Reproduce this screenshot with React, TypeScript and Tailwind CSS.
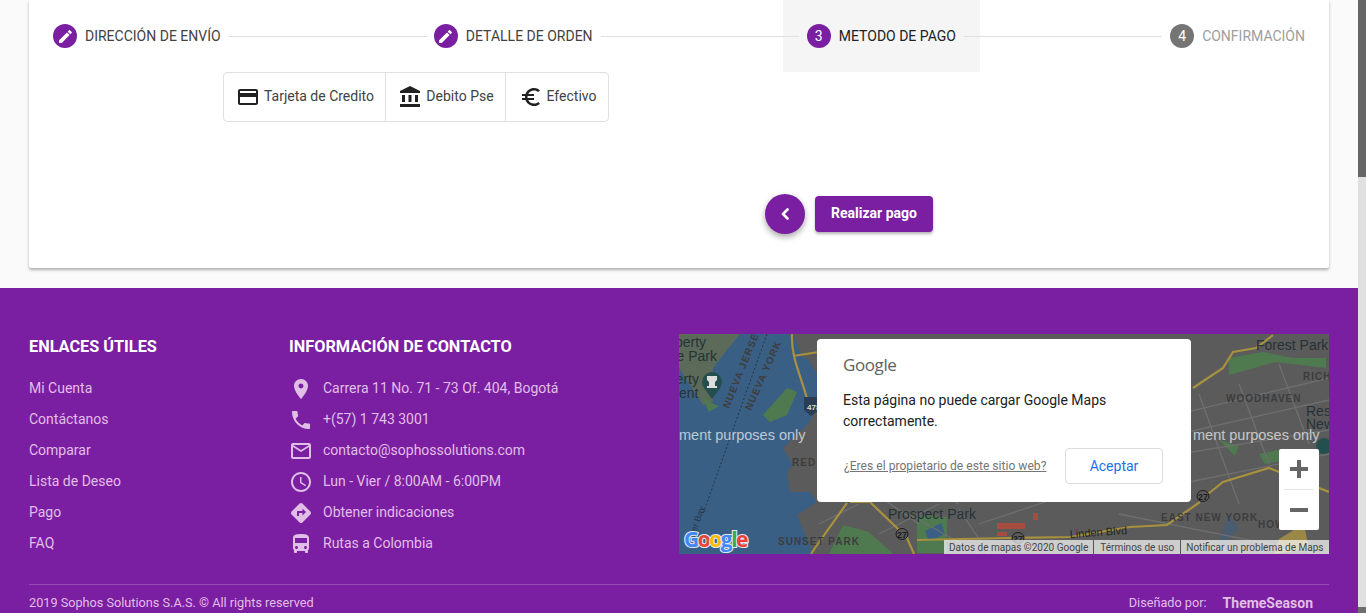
import React from "react";
import { MdEdit, MdCreditCard, MdAccountBalance, MdEuroSymbol, MdPlace, MdPhone, MdMailOutline, MdAccessTime, MdDirections, MdDirectionsBus } from "react-icons/md";

const Step = ({ mark, label, active, muted }: { mark: React.ReactNode; label: string; active?: boolean; muted?: boolean }) => (
  <div className={`flex h-[72px] shrink-0 items-center px-6 ${active ? "bg-[#f5f5f5]" : ""}`}>
    <span className={`mr-2 flex h-6 w-6 items-center justify-center rounded-full text-[14px] text-white ${muted ? "bg-[#757575]" : "bg-[#7b1fa2]"}`}>{mark}</span>
    <span className={`text-[14px] ${muted ? "text-[#9e9e9e]" : active ? "text-[#212121]" : "text-[#424242]"}`}>{label}</span>
  </div>
);
const Line = ({ first }: { first?: boolean }) => <div className={`relative z-10 h-0 flex-1 -ml-4 border-t border-[#e0e0e0] ${first ? "-mr-[17px]" : "-mr-4"}`} />;

const Tab = ({ icon, label, w, last }: { icon: React.ReactNode; label: string; w: string; last?: boolean }) => (
  <div className={`flex h-full items-center justify-center gap-1 pl-px text-[14px] text-[#424242] ${w} ${last ? "" : "border-r border-[#e0e0e0]"}`}>
    {icon}
    <span className="pb-[2px]">{label}</span>
  </div>
);

const links = ["Mi Cuenta", "Contáctanos", "Comparar", "Lista de Deseo", "Pago", "FAQ"];
const contacts: [React.ReactNode, string][] = [
  [<MdPlace size={24} />, "Carrera 11 No. 71 - 73 Of. 404, Bogotá"],
  [<MdPhone size={24} />, "+(57) 1 743 3001"],
  [<MdMailOutline size={24} />, "contacto@sophossolutions.com"],
  [<MdAccessTime size={24} />, "Lun - Vier / 8:00AM - 6:00PM"],
  [<MdDirections size={24} />, "Obtener indicaciones"],
  [<MdDirectionsBus size={24} />, "Rutas a Colombia"],
];

const MapArt = () => (
  <svg viewBox="0 0 650 220" width={650} height={220} className="block" fontFamily="'Liberation Sans',sans-serif">
    <rect width="650" height="220" fill="#5b5b5b" />
    <path d="M0 0H114L138 40L138 71L131 88L104 114L114 131L108 138L111 158L131 158L138 168L118 181L134 220H0Z" fill="#3a5f85" />
    <path d="M0 0H61L44 21L34 34L34 68L24 71L0 34Z" fill="#5c6a59" />
    <path d="M114 0H150V24H124Z" fill="#5b5b5b" />
    <path d="M84 81L108 54L118 58L108 81L91 88Z" fill="#4f7a50" />
    <path d="M22 60L30 68L40 72L30 78Z" fill="#4f7a50" />
    <path d="M550 24L584 18L614 24L647 24L647 34L597 28L550 41Z" fill="#4f7a50" />
    <path d="M164 191L190 198L214 220H150Z" fill="#4f7a50" />
    <path d="M238 181L268 183L268 219H238Z" fill="#4f7a50" />
    <path d="M246 197L262 189L266 200L250 207Z" fill="#3a5f85" />
    <rect x="318" y="189" width="28" height="6" fill="#a84c42" />
    <rect x="318" y="198" width="10" height="4" fill="#a84c42" />
    <rect x="354" y="179" width="5" height="7" fill="#a84c42" />
    <path d="M470 70L490 64L498 74L478 80ZM580 120L600 116L606 126L586 130ZM540 106L560 112L556 122Z" fill="#4f7a50" />
    <path d="M600 205L625 190L630 215L595 220Z" fill="#b69b3d" opacity=".7" />
    <path d="M535 220L550 180L560 195Z" fill="#3a5f85" opacity=".5" />
    <g stroke="#6f6f6f" strokeWidth="1.3" fill="none">
      <path d="M500 80L650 44M500 100L650 66M500 120L650 96M500 150L650 120M520 60L560 170M560 50L590 130M600 30L630 110M140 120L240 190M170 110L280 170M230 180L300 220M280 175L310 220M300 190L450 140M440 180L640 220M200 200L260 170M140 190L180 170" />
    </g>
    <g stroke="#a8913e" strokeWidth="2.2" fill="none">
      <path d="M514 54L544 34L554 18L577 14L594 1" />
      <path d="M524 164L544 148L590 134L650 158" />
      <path d="M238 206L328 204L391 203L451 193L488 191L521 168" />
      <path d="M171 168L191 168L218 194L228 204L235 220" />
      <path d="M168 169L138 211L132 220" />
      <path d="M113 0C112 25 122 40 130 72" />
      <path d="M114 22L140 18" />
    </g>
    <path d="M125 63H140V76L132 82L125 76Z" fill="#2b3d55" />
    <text x="128" y="76" fontSize="8" fontWeight="bold" fill="#ddd">478</text>
    <circle cx="33" cy="48" r="10" fill="#254e4f" />
    <path d="M25 54L33 65L41 54Z" fill="#254e4f" />
    <path d="M28 42H38V46L36 48V52H38V54H28V52H30V48L28 46Z" fill="#dddddd" />
    <g fontSize="14" fill="#263238">
      <text x="-4" y="13">berty</text>
      <text x="-2.5" y="27">e Park</text>
      <text x="-3.4" y="50">erty</text>
      <text x="0" y="64">ent</text>
      <text x="209" y="185">Prospect Park</text>
      <text x="577" y="16">Forest Park</text>
      <text x="627" y="82">Res</text>
      <text x="627" y="95">New</text>
    </g>
    <g fontSize="10" fontWeight="bold" fill="#3d3d3d" letterSpacing="1">
      <text transform="translate(50 75) rotate(-68)">NUEVA JERSEY</text>
      <text transform="translate(72 77) rotate(-66)">NUEVA YORK</text>
      <text x="113" y="132">RED H</text>
      <text x="99" y="211">SUNSET PARK</text>
      <text x="482" y="187">EAST NEW YORK</text>
      <text x="547" y="68">WOODHAVEN</text>
      <text x="624" y="46">RICH</text>
      <text x="579" y="194">HOW</text>
    </g>
    <text x="16" y="203" transform="rotate(-72 16 203)" fontSize="9" fill="#28384a">per Bay</text>
    <g fill="none" stroke="#1f2a33" strokeDasharray="2 2" strokeWidth=".8"><path d="M88 0L24 180" /></g>
    <text x="0" y="106" fontSize="14.5" fill="#ffffff" opacity=".65">ment purposes only</text>
    <text x="514" y="106" fontSize="14.5" fill="#ffffff" opacity=".65">ment purposes only</text>
    <circle cx="645" cy="112" r="8" fill="#254e4f" />
    <g fill="#1d1d1d" fontSize="9" fontWeight="bold" textAnchor="middle">
      <ellipse cx="223" cy="200" rx="6" ry="5.5" fill="#5b5b5b" stroke="#1d1d1d" />
      <text x="223" y="203.5">27</text>
      <ellipse cx="524" cy="162" rx="6" ry="5.5" fill="#5b5b5b" stroke="#1d1d1d" />
      <text x="524" y="165.5">27</text>
      <ellipse cx="339" cy="204" rx="6" ry="5.5" fill="#5b5b5b" stroke="#1d1d1d" />
      <text x="339" y="207.5">27</text>
    </g>
    <text transform="translate(391 204) rotate(-4)" fontSize="11" fill="#222222">Linden Blvd</text>
    <g fontSize="21" fontWeight="bold" stroke="#dfe6ee" strokeWidth="2.2" paintOrder="stroke" fontFamily="'Open Sans',sans-serif">
      <text x="5" y="213" letterSpacing="-1.5"><tspan fill="#4285f4">G</tspan><tspan fill="#ea4335">o</tspan><tspan fill="#fbbc05">o</tspan><tspan fill="#4285f4">g</tspan><tspan fill="#34a853">l</tspan><tspan fill="#ea4335">e</tspan></text>
    </g>
  </svg>
);

export default function App() {
  return (
    <div className="flex h-[613px] w-[1366px] overflow-hidden bg-[#fafafa] font-['Roboto',sans-serif]">
      <div className="flex w-[1358px] flex-col">
        <div className="px-[29px]">
          <div className="h-[268px] rounded-b-[2px] bg-white shadow-[0_2px_3px_rgba(0,0,0,0.3)]">
            <div className="flex h-[72px] items-center">
              <Step mark={<MdEdit size={17} />} label="DIRECCIÓN DE ENVÍO" />
              <Line first />
              <Step mark={<MdEdit size={17} />} label="DETALLE DE ORDEN" />
              <Line />
              <Step mark="3" label="METODO DE PAGO" active />
              <Line />
              <Step mark="4" label="CONFIRMACIÓN" muted />
            </div>
            <div className="pl-[194px]">
              <div className="flex h-[50px] w-[386px] items-center rounded-[4px] border border-[#e0e0e0]">
                <Tab icon={<MdCreditCard size={24} className="text-[#212121]" />} label="Tarjeta de Credito" w="w-[162px]" />
                <Tab icon={<MdAccountBalance size={24} className="text-[#212121]" />} label="Debito Pse" w="w-[120px]" />
                <Tab icon={<MdEuroSymbol size={24} className="text-[#212121]" />} label="Efectivo" w="w-[102px]" last />
              </div>
            </div>
            <div className="mt-[72px] flex items-center gap-[10px] pl-[736px]">
              <button className="flex h-10 w-10 items-center justify-center rounded-full bg-[#7b1fa2] text-white shadow-[0_3px_6px_rgba(0,0,0,0.35)]">
                <svg width="10" height="12" viewBox="0 0 10 12" fill="none" stroke="#ffffff" strokeWidth="2.6" strokeLinecap="round" strokeLinejoin="round"><path d="M7.5 1.5L3 6l4.5 4.5" /></svg>
              </button>
              <button className="flex h-9 w-[118px] items-center justify-center rounded-[4px] bg-[#7b1fa2] pb-[1px] text-[14px] font-bold text-white shadow-[0_2px_3px_rgba(0,0,0,0.3)]">Realizar pago</button>
            </div>
          </div>
        </div>
        <footer className="mt-5 flex-1 bg-[#7b1fa2] px-[29px] pt-[46px] text-[14px] text-[#e1bee7]">
          <div className="flex">
            <div className="w-[260px] pt-[1px]">
              <h3 className="text-[16.3px] leading-6 font-bold text-white">ENLACES ÚTILES</h3>
              <ul className="mt-[14px]">
                {links.map((l) => <li key={l} className="flex h-[31px] items-center">{l}</li>)}
              </ul>
            </div>
            <div className="w-[390px] pt-[1px]">
              <h3 className="text-[16.3px] leading-6 font-bold text-white">INFORMACIÓN DE CONTACTO</h3>
              <ul className="mt-[14px]">
                {contacts.map(([ic, t]) => <li key={t} className="flex h-[31px] items-center gap-[10px]">{ic}<span>{t}</span></li>)}
              </ul>
            </div>
            <div className="relative h-[220px] w-[650px]">
              <MapArt />
              <div className="absolute top-[5px] left-[138px] h-[163px] w-[374px] rounded-[4px] bg-white px-[26px] pt-[15px] text-[#212121]">
                <div className="text-[17px] leading-[22px] tracking-[-0.4px] text-[#616161] font-['Open_Sans',sans-serif]">Google</div>
                <p className="mt-[14px] w-[300px] text-[14px] leading-[21px]">Esta página no puede cargar Google Maps correctamente.</p>
                <div className="mt-[16px] flex items-center justify-between pr-[2px]">
                  <span className="ml-[1px] text-[12.12px] text-[#757575] underline">¿Eres el propietario de este sitio web?</span>
                  <span className="flex h-9 w-[98px] items-center justify-center rounded-[4px] border border-[#dadce0] text-[14px] text-[#1a73e8]">Aceptar</span>
                </div>
              </div>
              <div className="absolute top-[115px] left-[600px] flex h-[81px] w-10 flex-col items-center rounded-[2px] bg-white">
                <div className="flex h-10 items-center">
                  <svg width="20" height="20" viewBox="0 0 20 20" fill="#666666"><path d="M8 1h4v7h7v4h-7v7H8v-7H1V8h7z" /></svg>
                </div>
                <div className="h-px w-[30px] bg-[#e6e6e6]" />
                <div className="flex h-10 items-center">
                  <svg width="20" height="20" viewBox="0 0 20 20" fill="#666666"><path d="M1 8h18v4H1z" /></svg>
                </div>
              </div>
              <div className="absolute right-0 bottom-0 flex h-[14px] w-[385px] items-center bg-white/70 text-[10px] text-[#444444]">
                <span className="px-[5px]">Datos de mapas ©2020 Google</span>
                <span className="border-l border-[#555555] px-[6px]">Términos de uso</span>
                <span className="border-l border-[#555555] px-[5px]">Notificar un problema de Maps</span>
              </div>
            </div>
          </div>
          <div className="mt-[25px] flex h-[37px] items-center justify-between border-t border-white/20 text-[12.7px]">
            <span>2019 Sophos Solutions S.A.S. © All rights reserved</span>
            <span className="flex items-center pr-4"><span>Diseñado por:</span><span className="ml-4 text-[14px] font-bold">ThemeSeason</span></span>
          </div>
        </footer>
      </div>
      <div className="flex w-2 flex-col justify-between bg-[#e0e0e0]">
        <div className="h-[177px] bg-[#666666]" />
        <div className="h-[6px] bg-[#6e6e6e]" />
      </div>
    </div>
  );
}
